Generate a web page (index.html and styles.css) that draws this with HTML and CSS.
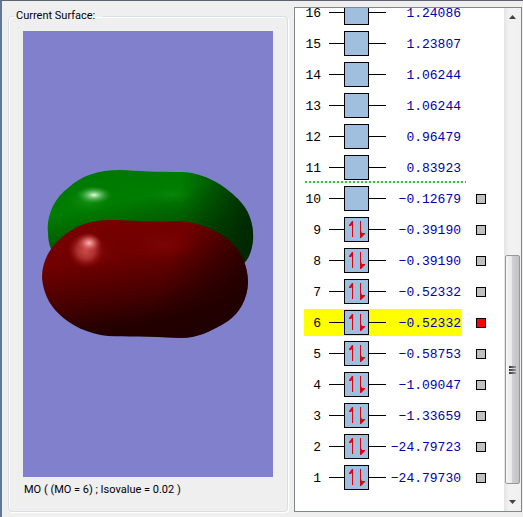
FILE: index.html
```html
<!DOCTYPE html>
<html lang="en">
<head>
<meta charset="utf-8">
<title>Current Surface</title>
<link rel="stylesheet" href="styles.css">
</head>
<body>
<svg class="defs" aria-hidden="true">
  <symbol id="empty" viewBox="0 0 57 25">
    <path d="M0 12.5H15M40 12.5H57" stroke="#000"/>
    <rect x="15.5" y=".5" width="24" height="24" fill="#a0bfdf" stroke="#000"/>
  </symbol>
  <symbol id="pair" viewBox="0 0 57 25">
    <use href="#empty" width="57" height="25"/>
    <path d="M23.5 20V5M31.5 4V20" stroke="#e00010"/>
    <path d="M24 4v4h-1l-1 1h-2v-1l3-4zM31 21v-7h1l1 2h3v1l-2 2-2 2z" fill="#e00010"/>
  </symbol>
</svg>
<main class="window">
  <fieldset class="surface">
    <legend>Current Surface:</legend>
    <svg class="view" viewBox="0 0 250 446" preserveAspectRatio="xMidYMid slice" role="img" aria-label="Orbital surface">
      <defs>
        <linearGradient id="green" x1=".3" y1="0" x2=".65" y2="1">
          <stop offset="0" stop-color="#007800"/><stop offset=".25" stop-color="#007d00"/>
          <stop offset=".55" stop-color="#005000"/><stop offset="1" stop-color="#002300"/>
        </linearGradient>
        <linearGradient id="greenSide">
          <stop offset=".65" stop-color="#002400" stop-opacity="0"/><stop offset="1" stop-color="#002400" stop-opacity=".9"/>
        </linearGradient>
        <linearGradient id="red" x1=".32" y1="0" x2=".6" y2="1">
          <stop offset="0" stop-color="#780000"/><stop offset=".3" stop-color="#700000"/>
          <stop offset=".6" stop-color="#4a0000"/><stop offset=".85" stop-color="#240000"/><stop offset="1" stop-color="#200000"/>
        </linearGradient>
        <linearGradient id="redSide" x1="0" y1=".3" x2="1" y2=".55">
          <stop offset=".6" stop-color="#200000" stop-opacity="0"/><stop offset=".95" stop-color="#200000" stop-opacity=".85"/>
        </linearGradient>
        <radialGradient id="greenGlow"><stop offset="0" stop-color="#159015"/><stop offset="1" stop-color="#078007" stop-opacity="0"/></radialGradient>
        <radialGradient id="redGlow"><stop offset="0" stop-color="#8c1010" stop-opacity=".7"/><stop offset="1" stop-color="#800000" stop-opacity="0"/></radialGradient>
        <radialGradient id="greenShine"><stop offset="0" stop-color="#e6ffe6"/><stop offset=".3" stop-color="#90d890" stop-opacity=".8"/><stop offset="1" stop-color="#209820" stop-opacity="0"/></radialGradient>
        <radialGradient id="redShine"><stop offset="0" stop-color="#ffb4b4"/><stop offset=".35" stop-color="#e87878" stop-opacity=".8"/><stop offset="1" stop-color="#a02020" stop-opacity="0"/></radialGradient>
        <radialGradient id="redSheen"><stop offset="0" stop-color="#d45050"/><stop offset=".5" stop-color="#bc3c3c" stop-opacity=".75"/><stop offset="1" stop-color="#901010" stop-opacity="0"/></radialGradient>
        <path id="back" d="M25 202C23 186 31 167 45 157C59 144 76 139 97 139C115 140 134 141 159 141C182 142 201 154 215 168C226 179 231 193 230 209C229 219 226 227 222 231L180 260H60L29 220C26 214 25 208 25 202Z"/>
        <path id="front" d="M19 247C19 230 26 218 38 207C51 195 68 189 87 189C110 189 128 192 155 190C174 191 194 198 209 212C219 222 225 236 225 252C224 269 217 281 205 290C187 301 174 307 157 307C126 305 101 306 85 305C65 303 47 294 36 283C25 273 20 259 19 247Z"/>
      </defs>
      <rect x="-500" y="-500" width="1300" height="1500" fill="#8080cc"/>
      <use href="#back" fill="url(#green)"/>
      <use href="#back" fill="url(#greenSide)"/>
      <ellipse cx="149" cy="164" rx="25" ry="9" fill="url(#greenGlow)" opacity=".5"/>
      <ellipse cx="65" cy="169" rx="24" ry="14" fill="url(#greenGlow)"/>
      <ellipse cx="71" cy="164" rx="18" ry="9" fill="url(#greenShine)"/>
      <use href="#front" fill="url(#red)"/>
      <use href="#front" fill="url(#redSide)"/>
      <ellipse cx="140" cy="214" rx="36" ry="18" fill="url(#redGlow)" opacity=".5"/>
      <ellipse cx="68" cy="220" rx="27" ry="20" fill="url(#redGlow)"/>
      <ellipse cx="63" cy="219" rx="18" ry="18" fill="url(#redSheen)"/>
      <ellipse cx="66" cy="212" rx="13" ry="10" fill="url(#redShine)"/>
    </svg>
    <p class="caption">MO ( (MO = 6) ; Isovalue = 0.02 )</p>
  </fieldset>
  <section class="panel" aria-label="Orbitals">
    <ol class="levels">
      <li><div class="level"><span class="num">16</span><svg><use href="#empty"/></svg><span class="energy">1.24086</span></div></li>
      <li><div class="level"><span class="num">15</span><svg><use href="#empty"/></svg><span class="energy">1.23807</span></div></li>
      <li><div class="level"><span class="num">14</span><svg><use href="#empty"/></svg><span class="energy">1.06244</span></div></li>
      <li><div class="level"><span class="num">13</span><svg><use href="#empty"/></svg><span class="energy">1.06244</span></div></li>
      <li><div class="level"><span class="num">12</span><svg><use href="#empty"/></svg><span class="energy">0.96479</span></div></li>
      <li class="frontier"><div class="level"><span class="num">11</span><svg><use href="#empty"/></svg><span class="energy">0.83923</span></div></li>
      <li><div class="level"><label class="num" for="mo10">10</label><svg><use href="#empty"/></svg><span class="energy">−0.12679</span></div><input type="checkbox" id="mo10"></li>
      <li><div class="level"><label class="num" for="mo9">9</label><svg><use href="#pair"/></svg><span class="energy">−0.39190</span></div><input type="checkbox" id="mo9"></li>
      <li><div class="level"><label class="num" for="mo8">8</label><svg><use href="#pair"/></svg><span class="energy">−0.39190</span></div><input type="checkbox" id="mo8"></li>
      <li><div class="level"><label class="num" for="mo7">7</label><svg><use href="#pair"/></svg><span class="energy">−0.52332</span></div><input type="checkbox" id="mo7"></li>
      <li><div class="level selected"><label class="num" for="mo6">6</label><svg><use href="#pair"/></svg><span class="energy">−0.52332</span></div><input type="checkbox" id="mo6" checked></li>
      <li><div class="level"><label class="num" for="mo5">5</label><svg><use href="#pair"/></svg><span class="energy">−0.58753</span></div><input type="checkbox" id="mo5"></li>
      <li><div class="level"><label class="num" for="mo4">4</label><svg><use href="#pair"/></svg><span class="energy">−1.09047</span></div><input type="checkbox" id="mo4"></li>
      <li><div class="level"><label class="num" for="mo3">3</label><svg><use href="#pair"/></svg><span class="energy">−1.33659</span></div><input type="checkbox" id="mo3"></li>
      <li><div class="level"><label class="num" for="mo2">2</label><svg><use href="#pair"/></svg><span class="energy">−24.79723</span></div><input type="checkbox" id="mo2"></li>
      <li><div class="level"><label class="num" for="mo1">1</label><svg><use href="#pair"/></svg><span class="energy">−24.79730</span></div><input type="checkbox" id="mo1"></li>
    </ol>
    <div class="scrollbar">
      <button type="button" aria-label="Scroll up"><svg viewBox="0 0 7 4"><path d="M0 4L3.500 0L7 4Z" fill="#444"/></svg></button>
      <div class="track"><div class="thumb"><i></i><i></i><i></i></div></div>
      <button type="button" aria-label="Scroll down"><svg viewBox="0 0 7 4"><path d="M0 0L3.500 4L7 0Z" fill="#444"/></svg></button>
    </div>
  </section>
</main>
</body>
</html>
```
FILE: styles.css
```css
* { box-sizing: border-box; }
body { margin: 0; background: #efeff0; color: #000; font: 11px/18px Roboto, "Liberation Sans", Arial, sans-serif; }
.defs { position: absolute; width: 0; height: 0; }
.window {
  display: flex;
  gap: 6px;
  height: 100vh;
  padding: 6px 1px 5px 6px;
  border-top: 1px solid #5c6270;
  border-left: 2px solid #5c7896;
}
.surface {
  display: flex;
  flex: 1;
  flex-direction: column;
  min-width: 0;
  margin: 0;
  padding: 6px 14px 12px;
  border: 1px solid #d5dfe5;
  border-radius: 4px;
  box-shadow: inset 1px 1px #fff, 1px 1px #fff;
}
.surface legend { margin-left: -9px; padding: 0 8px 0 2px; }
.view { flex: 1; width: 100%; min-height: 0; }
.caption { margin: 4px 0 0 1px; white-space: nowrap; }
.panel { display: flex; width: 228px; background: #fff; border: 1px solid #82868f; overflow: hidden; }
.levels {
  display: flex;
  flex: 1;
  flex-direction: column;
  justify-content: flex-end;
  margin: 0;
  padding: 0 0 18px 9px;
  list-style: none;
  font: 13px/16px "Liberation Mono", "Courier New", monospace;
}
.levels li { display: flex; flex: none; align-items: center; gap: 14px; height: 31px; }
.level { display: flex; align-items: center; width: 158px; height: 27px; }
.selected { background: #ff0; }
.num, .energy { padding-top: 2px; text-align: right; }
.num { width: 17px; margin-right: 8px; }
.level svg { flex: none; width: 57px; height: 25px; }
.energy { flex: 1; padding-right: 1px; color: #0000a8; }
.frontier { position: relative; }
.frontier::after {
  content: "";
  position: absolute;
  left: 1px;
  bottom: 0;
  width: 161px;
  height: 2px;
  background: repeating-linear-gradient(90deg, #40c040 0 2px, #e8ffe8 2px 4px);
}
.levels input { appearance: none; width: 10px; height: 10px; margin: 0; background: #c0c0c0; border: 1px solid #000; }
.levels input:checked { background: #f00; }
.scrollbar { display: flex; flex-direction: column; width: 17px; background: linear-gradient(90deg, #e4e4e4, #f2f2f2 30%, #f0f0f0); }
.scrollbar button { display: grid; place-items: center; height: 18px; padding: 0; border: 0; background: none; }
.scrollbar button svg { width: 7px; height: 4px; }
.track { display: flex; flex: 1; flex-direction: column; justify-content: flex-end; padding: 0 1px 9px; }
.thumb {
  display: flex;
  flex-direction: column;
  align-items: center;
  justify-content: center;
  gap: 1px;
  height: 50%;
  background: linear-gradient(90deg, #f6f6f6, #e8e8ea 45%, #d0d0d3 50%, #c2c2c6);
  border: 1px solid #989898;
  border-radius: 2px;
}
.thumb i { width: 7px; height: 2px; background: linear-gradient(90deg, #333, #999); }
```
